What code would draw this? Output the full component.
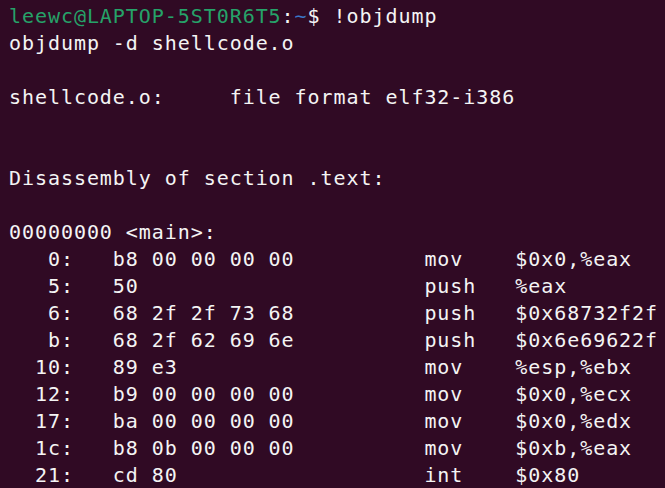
import React from 'react'

const rows = [
  ['    0:', 'b8 00 00 00 00', 'mov', '$0x0,%eax'],
  ['    5:', '50', 'push', '%eax'],
  ['    6:', '68 2f 2f 73 68', 'push', '$0x68732f2f'],
  ['    b:', '68 2f 62 69 6e', 'push', '$0x6e69622f'],
  ['   10:', '89 e3', 'mov', '%esp,%ebx'],
  ['   12:', 'b9 00 00 00 00', 'mov', '$0x0,%ecx'],
  ['   17:', 'ba 00 00 00 00', 'mov', '$0x0,%edx'],
  ['   1c:', 'b8 0b 00 00 00', 'mov', '$0xb,%eax'],
  ['   21:', 'cd 80', 'int', '$0x80'],
]

export default function App() {
  const fmt = (r) => {
    const addr = r[0].slice(1).padEnd(8, ' ')
    const bytes = r[1].padEnd(24, ' ')
    const op = r[2].padEnd(7, ' ')
    return addr + bytes + op + r[3]
  }

  return (
    <div className="w-[665px] h-[488px] overflow-hidden bg-[#300a24] text-[#f4f4f4]">
      <pre className="pl-[9px] pt-[3px] font-['DejaVu_Sans_Mono',monospace] text-[20px] leading-[27px] tracking-[0.94px] whitespace-pre">
        <div>
          <span className="text-[#26a269]">leewc@LAPTOP-5ST0R6T5</span>
          <span>:</span>
          <span className="text-[#3a78c9]">~</span>
          <span>$ !objdump</span>
        </div>
        <div>objdump -d shellcode.o</div>
        <div>&nbsp;</div>
        <div>shellcode.o:     file format elf32-i386</div>
        <div>&nbsp;</div>
        <div>&nbsp;</div>
        <div>Disassembly of section .text:</div>
        <div>&nbsp;</div>
        <div>00000000 &lt;main&gt;:</div>
        {rows.map((r) => (
          <div key={r[0]}>{fmt(r)}</div>
        ))}
      </pre>
    </div>
  )
}
